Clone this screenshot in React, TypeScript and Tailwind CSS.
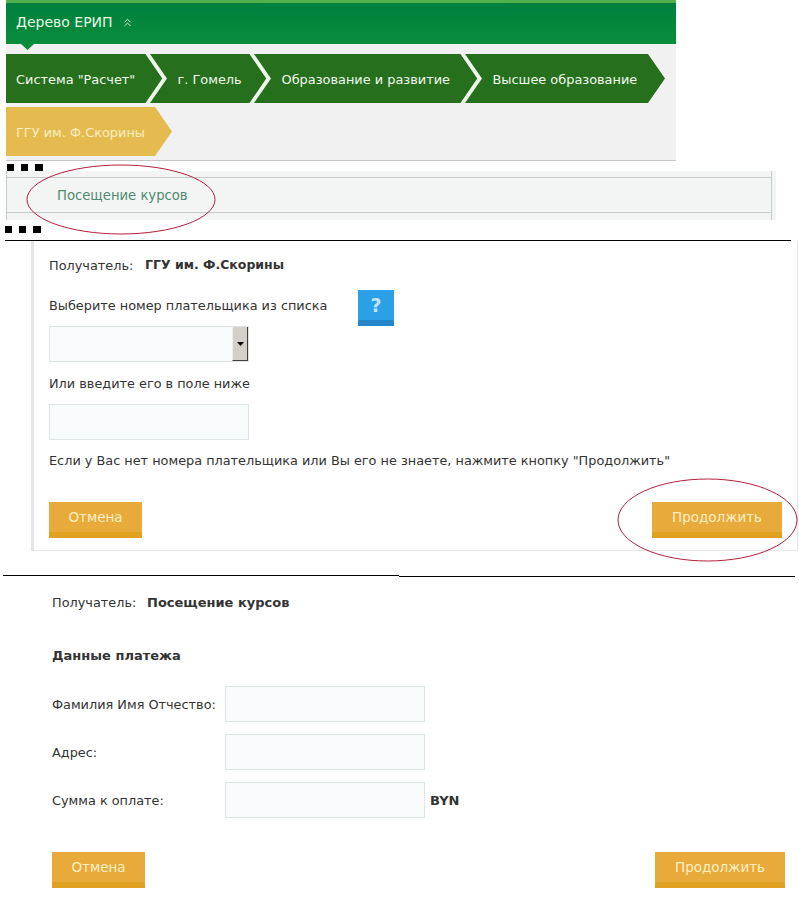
import React from 'react';
import { ChevronsUp } from 'lucide-react';

const Crumb: React.FC<{ label: string; width: string; first?: boolean; last?: boolean; gold?: boolean }> = ({
  label,
  width,
  first,
  last,
  gold,
}) => (
  <div className={`relative h-[49px] shrink-0 ${width} ${first ? '' : '-ml-[13px]'}`}>
    <div
      className={`flex h-full items-center pt-[3px] text-[12.9px] ${
        first ? 'pl-[10px]' : 'pl-[27.5px]'
      } ${
        first
          ? '[clip-path:polygon(0_0,calc(100%-17px)_0,100%_50%,calc(100%-17px)_100%,0_100%)]'
          : '[clip-path:polygon(0_0,calc(100%-17px)_0,100%_50%,calc(100%-17px)_100%,0_100%,17px_50%)]'
      } ${gold ? 'bg-[#e5bb50] text-[#fbeec2]' : 'bg-[#26701d] text-[#f3f8ef]'}`}
    >
      {label}
    </div>
    {!last && !gold && (
      <svg className="absolute -right-[4px] -top-[2px]" width="22" height="53" viewBox="0 0 22 53">
        <polyline points="1,0 19,26.5 1,53" fill="none" stroke="#eef7ea" strokeWidth="3" />
      </svg>
    )}
  </div>
);

const Dots: React.FC<{ className: string }> = ({ className }) => (
  <div className={`flex gap-[7px] ${className}`}>
    <div className="h-[7px] w-[7px] bg-black" />
    <div className="h-[7px] w-[7px] bg-black" />
    <div className="h-[7px] w-[8px] bg-black" />
  </div>
);

const ActionButton: React.FC<{ label: string; width: string }> = ({ label, width }) => (
  <button
    className={`h-[36px] ${width} border-b-[6px] border-[#e0a020] bg-[#e8aa3a] text-[13.5px] text-[#fdf0c4]`}
  >
    {label}
  </button>
);

const Field: React.FC<{ className?: string }> = ({ className = '' }) => (
  <input
    type="text"
    className={`h-[36px] w-[200px] border border-[#dfe6e6] bg-[#f8fbfb] outline-none ${className}`}
  />
);

const Ellipse: React.FC<{ className: string; w: number; h: number }> = ({ className, w, h }) => (
  <svg className={`absolute ${className}`} width={w} height={h} viewBox={`0 0 ${w} ${h}`}>
    <ellipse cx={w / 2} cy={h / 2} rx={w / 2 - 1} ry={h / 2 - 1} fill="none" stroke="#b31f3d" strokeWidth="1" />
  </svg>
);

const PaymentRow: React.FC<{ label: string; suffix?: string }> = ({ label, suffix }) => (
  <div className="flex items-center">
    <span className="w-[173px] shrink-0 pt-[2px]">{label}</span>
    <Field />
    {suffix && <b className="ml-[5px] pt-[2px] text-[13px]">{suffix}</b>}
  </div>
);

export default function App() {
  return (
    <div className="relative h-[900px] w-[799px] overflow-hidden bg-white font-['DejaVu_Sans',sans-serif] text-[12.85px] text-[#333]">
      {/* Tree header */}
      <div className="ml-[6px] w-[670px]">
        <div className="relative flex h-[44px] items-center gap-[8px] border-t-[3px] border-[#52b04f] bg-gradient-to-b from-[#01803e] to-[#088d3a] pb-[3px] pl-[10px] text-[14px] text-[#e6f7e6]">
          <span>Дерево ЕРИП</span>
          <ChevronsUp size={13} strokeWidth={1.75} />
          <div className="absolute -bottom-[6px] left-[15px] h-[6px] w-[13px] bg-[#088d3a] [clip-path:polygon(0_0,100%_0,50%_100%)]" />
        </div>
        <div className="h-[117px] border-b border-[#c4c4c4] bg-[#f1f1f1] pt-[10px]">
          <div className="flex">
            <Crumb first label={'Система "Расчет"'} width="w-[157px]" />
            <Crumb label="г. Гомель" width="w-[117px]" />
            <Crumb label="Образование и развитие" width="w-[224px]" />
            <Crumb last label="Высшее образование" width="w-[200px]" />
          </div>
          <div className="mt-[4px] flex">
            <Crumb first gold label="ГГУ им. Ф.Скорины" width="w-[166px]" />
          </div>
        </div>
      </div>

      <Dots className="ml-[7px] mt-[3px]" />

      {/* Service list */}
      <div className="ml-[6px] h-[49px] w-[770px] bg-[#f3f4f4]">
        <div className="h-full w-[766px] border-x border-[#c6cccc] pt-[6px]">
          <div className="h-[36px] border-y border-[#c6cccc] pl-[50px] text-[13.2px] leading-[36px] text-[#4f8a70]">
            Посещение курсов
          </div>
        </div>
      </div>

      <Dots className="ml-[5px] mt-[6px]" />

      <div className="ml-[5px] mt-[7px] h-px w-[786px] bg-black" />

      {/* Payer step */}
      <div className="ml-[31px] h-[310px] w-[767px] border-b border-l-[3px] border-r border-[#e6e6e6] pl-[15px] pr-[15px] pt-[17px]">
        <div className="flex h-[15px] items-center">
          <span className="w-[96px]">Получатель:</span>
          <b className="text-[12.5px]">ГГУ им. Ф.Скорины</b>
        </div>
        <div className="relative mt-[25px] h-[15px] leading-[15px]">
          Выберите номер плательщика из списка
          <div className="absolute -top-[8px] left-[309px] flex h-[36px] w-[36px] items-center justify-center border-b-[6px] border-[#2587c9] bg-[#2c9fe9] text-[19px] font-bold text-[#bfe3fa]">
            ?
          </div>
        </div>
        <div className="mt-[13px] flex h-[36px] w-[200px] justify-end border border-[#dfe3e3] bg-[#f8fbfb]">
          <div className="flex w-[16px] items-center justify-center border-b border-r border-l border-b-[#404040] border-r-[#404040] border-l-[#f0eee8] bg-[#d4d0c8]">
            <svg width="7" height="4" viewBox="0 0 7 4">
              <path d="M0 0h7L3.5 4z" fill="#000" />
            </svg>
          </div>
        </div>
        <div className="mt-[14px] h-[15px] leading-[15px]">Или введите его в поле ниже</div>
        <Field className="mt-[13px] block" />
        <div className="mt-[13px] h-[15px] leading-[15px]">
          Если у Вас нет номера плательщика или Вы его не знаете, нажмите кнопку "Продолжить"
        </div>
        <div className="mt-[34px] flex justify-between">
          <ActionButton label="Отмена" width="w-[93px]" />
          <ActionButton label="Продолжить" width="w-[130px]" />
        </div>
      </div>

      <div className="mt-[24px] flex">
        <div className="ml-[3px] h-px w-[396px] bg-black" />
        <div className="mt-px h-px w-[396px] bg-black" />
      </div>

      {/* Payment step */}
      <div className="ml-[52px] w-[733px] pt-[18px]">
        <div className="flex h-[15px] items-center">
          <span className="w-[95px]">Получатель:</span>
          <b className="text-[13px]">Посещение курсов</b>
        </div>
        <div className="mt-[38px] h-[15px] text-[13px] font-bold leading-[15px]">Данные платежа</div>
        <div className="mt-[23px] flex flex-col gap-[12px]">
          <PaymentRow label="Фамилия Имя Отчество:" />
          <PaymentRow label="Адрес:" />
          <PaymentRow label="Сумма к оплате:" suffix="BYN" />
        </div>
        <div className="mt-[34px] flex justify-between">
          <ActionButton label="Отмена" width="w-[93px]" />
          <ActionButton label="Продолжить" width="w-[130px]" />
        </div>
      </div>

      {/* Red hand-drawn marks */}
      <Ellipse className="left-[26px] top-[164px]" w={190} h={71} />
      <Ellipse className="left-[617px] top-[478px]" w={181} h={84} />
    </div>
  );
}
